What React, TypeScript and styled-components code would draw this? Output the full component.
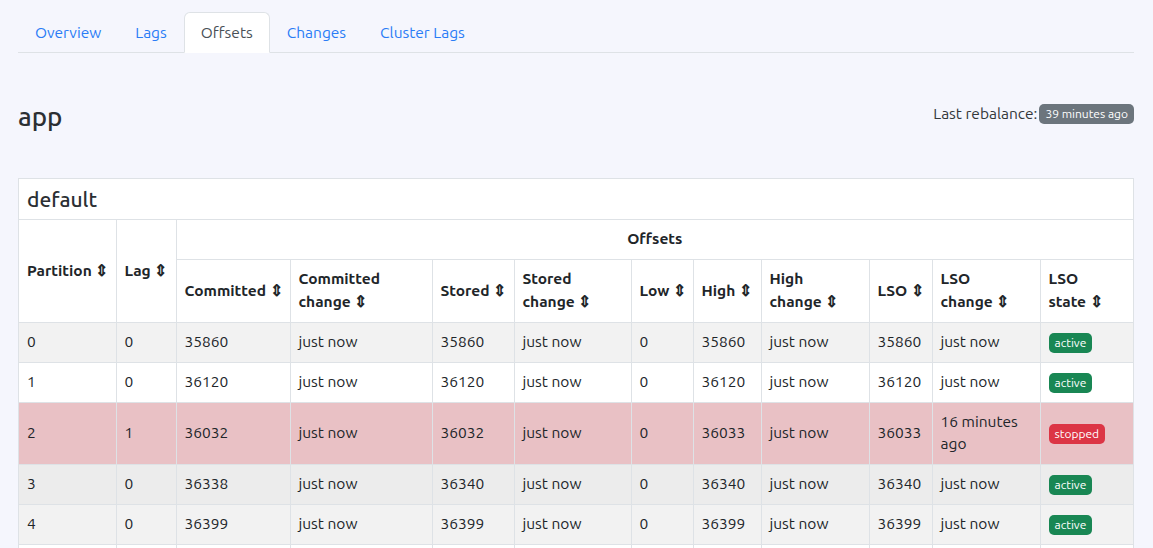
import React from "react";
import styled, { createGlobalStyle } from "styled-components";

const GlobalStyle = createGlobalStyle`
  html, body {
    margin: 0;
    padding: 0;
    background: #f5f6fd;
    font-family: "Ubuntu", "Open Sans", "Noto Sans", sans-serif;
    font-size: 15.5px;
    line-height: 1.5;
    color: #212529;
  }
  * { box-sizing: border-box; }
`;

type State = "active" | "stopped";

interface Row {
  partition: number;
  lag: number;
  committed: number;
  committedChange: string;
  stored: number;
  storedChange: string;
  low: number;
  high: number;
  highChange: string;
  lso: number;
  lsoChange: string;
  state: State;
}

const rows: Row[] = [
  { partition: 0, lag: 0, committed: 35860, committedChange: "just now", stored: 35860, storedChange: "just now", low: 0, high: 35860, highChange: "just now", lso: 35860, lsoChange: "just now", state: "active" },
  { partition: 1, lag: 0, committed: 36120, committedChange: "just now", stored: 36120, storedChange: "just now", low: 0, high: 36120, highChange: "just now", lso: 36120, lsoChange: "just now", state: "active" },
  { partition: 2, lag: 1, committed: 36032, committedChange: "just now", stored: 36032, storedChange: "just now", low: 0, high: 36033, highChange: "just now", lso: 36033, lsoChange: "16 minutes ago", state: "stopped" },
  { partition: 3, lag: 0, committed: 36338, committedChange: "just now", stored: 36340, storedChange: "just now", low: 0, high: 36340, highChange: "just now", lso: 36340, lsoChange: "just now", state: "active" },
  { partition: 4, lag: 0, committed: 36399, committedChange: "just now", stored: 36399, storedChange: "just now", low: 0, high: 36399, highChange: "just now", lso: 36399, lsoChange: "just now", state: "active" },
  { partition: 5, lag: 0, committed: 36217, committedChange: "just now", stored: 36217, storedChange: "just now", low: 0, high: 36217, highChange: "just now", lso: 36217, lsoChange: "just now", state: "active" },
  { partition: 6, lag: 0, committed: 36054, committedChange: "just now", stored: 36054, storedChange: "just now", low: 0, high: 36054, highChange: "just now", lso: 36054, lsoChange: "just now", state: "active" },
];

const tabs = ["Overview", "Lags", "Offsets", "Changes", "Cluster Lags"];

// label lines: the last line gets the sort arrow
const subHeaders: { lines: string[]; width: number }[] = [
  { lines: ["Committed"], width: 114 },
  { lines: ["Committed", "change"], width: 142 },
  { lines: ["Stored"], width: 82 },
  { lines: ["Stored", "change"], width: 117 },
  { lines: ["Low"], width: 62 },
  { lines: ["High"], width: 68 },
  { lines: ["High", "change"], width: 108 },
  { lines: ["LSO"], width: 63 },
  { lines: ["LSO", "change"], width: 108 },
  { lines: ["LSO", "state"], width: 93 },
];

const App = () => {
  return (
    <>
      <GlobalStyle />
      <Page>
        <Nav>
          {tabs.map(t => (
            <Tab key={t} active={t === "Offsets"}>
              {t}
            </Tab>
          ))}
        </Nav>

        <TitleRow>
          <Title>app</Title>
          <Rebalance>
            Last rebalance: <Badge tone="secondary">39 minutes ago</Badge>
          </Rebalance>
        </TitleRow>

        <Card>
          <CardHeader>default</CardHeader>
          <Table>
            <colgroup>
              <col style={{ width: 97 }} />
              <col style={{ width: 60 }} />
              {subHeaders.map(h => (
                <col key={h.lines.join(" ")} style={{ width: h.width }} />
              ))}
            </colgroup>
            <thead>
              <tr>
                <Th rowSpan={2}>Partition ⇕</Th>
                <Th rowSpan={2}>Lag ⇕</Th>
                <Th colSpan={10} center>
                  Offsets
                </Th>
              </tr>
              <tr>
                {subHeaders.map(h => (
                  <Th key={h.lines.join(" ")}>
                    {h.lines.map((l, i) => (
                      <HeadLine key={l}>
                        {l}
                        {i === h.lines.length - 1 ? " ⇕" : ""}
                      </HeadLine>
                    ))}
                  </Th>
                ))}
              </tr>
            </thead>
            <tbody>
              {rows.map((r, i) => (
                <Tr
                  key={r.partition}
                  variant={
                    r.state === "stopped"
                      ? "danger"
                      : i === 3
                      ? "hover"
                      : i % 2 === 0
                      ? "striped"
                      : "plain"
                  }
                >
                  <Td>{r.partition}</Td>
                  <Td>{r.lag}</Td>
                  <Td>{r.committed}</Td>
                  <Td>{r.committedChange}</Td>
                  <Td>{r.stored}</Td>
                  <Td>{r.storedChange}</Td>
                  <Td>{r.low}</Td>
                  <Td>{r.high}</Td>
                  <Td>{r.highChange}</Td>
                  <Td>{r.lso}</Td>
                  <Td>{r.lsoChange}</Td>
                  <Td>
                    <Badge tone={r.state === "active" ? "success" : "danger"}>{r.state}</Badge>
                  </Td>
                </Tr>
              ))}
            </tbody>
          </Table>
        </Card>
      </Page>
    </>
  );
};

export default App;

const Page = styled.div`
  padding: 12px 19px 40px 18px;
`;

const Nav = styled.div`
  display: flex;
  border-bottom: 1px solid #dee2e6;
`;

const Tab = styled.div<{ active?: boolean }>`
  padding: 7px 16px;
  height: 41px;
  margin-bottom: -1px;
  font-size: 15.5px;
  line-height: 25px;
  border: 1px solid ${p => (p.active ? "#dee2e6" : "transparent")};
  border-bottom-color: ${p => (p.active ? "#fff" : "transparent")};
  border-radius: 6px 6px 0 0;
  background: ${p => (p.active ? "#fff" : "transparent")};
  color: ${p => (p.active ? "#495057" : "#2a7cf6")};
`;

const TitleRow = styled.div`
  display: flex;
  justify-content: space-between;
  align-items: center;
  margin-top: 44px;
  height: 40px;
`;

const Title = styled.h3`
  margin: 0;
  font-size: 26px;
  font-weight: 500;
  line-height: 1.2;
  color: #2b2f33;
`;

const Rebalance = styled.div`
  font-size: 15.5px;
  color: #33373b;
  display: flex;
  align-items: center;
  gap: 2px;
  margin-bottom: 6px;
`;

const badgeColors = {
  secondary: "#6c757d",
  success: "#198754",
  danger: "#dc3545",
};

const Badge = styled.span<{ tone: keyof typeof badgeColors }>`
  display: inline-block;
  padding: 3px 6px;
  font-size: 12px;
  line-height: 1.15;
  font-weight: 400;
  color: #fff;
  border-radius: 5px;
  background: ${p => badgeColors[p.tone]};
`;

const Card = styled.div`
  margin-top: 41px;
  background: #fff;
  border: 1px solid #dee2e6;
`;

const CardHeader = styled.div`
  padding: 8px 8px 7px;
  font-size: 21px;
  font-weight: 500;
  line-height: 1.2;
  border-bottom: 1px solid #dee2e6;
  color: #2b2f33;
`;

const Table = styled.table`
  width: 100%;
  border-collapse: collapse;
  border-style: hidden;
  table-layout: fixed;
`;

const Th = styled.th<{ center?: boolean }>`
  padding: 8.25px 8px;
  border: 1px solid #dee2e6;
  text-align: ${p => (p.center ? "center" : "left")};
  vertical-align: middle;
  font-weight: 700;
  line-height: 22.5px;
  white-space: nowrap;
`;

const HeadLine = styled.div`
  white-space: nowrap;
`;

const rowBg = {
  plain: "#ffffff",
  striped: "#f2f2f2",
  hover: "#ececec",
  danger: "#e9c1c5",
};

const Tr = styled.tr<{ variant: keyof typeof rowBg }>`
  background: ${p => rowBg[p.variant]};
`;

const Td = styled.td`
  padding: 8.25px 8px;
  border: 1px solid #dee2e6;
  vertical-align: middle;
  line-height: 22.5px;
`;
